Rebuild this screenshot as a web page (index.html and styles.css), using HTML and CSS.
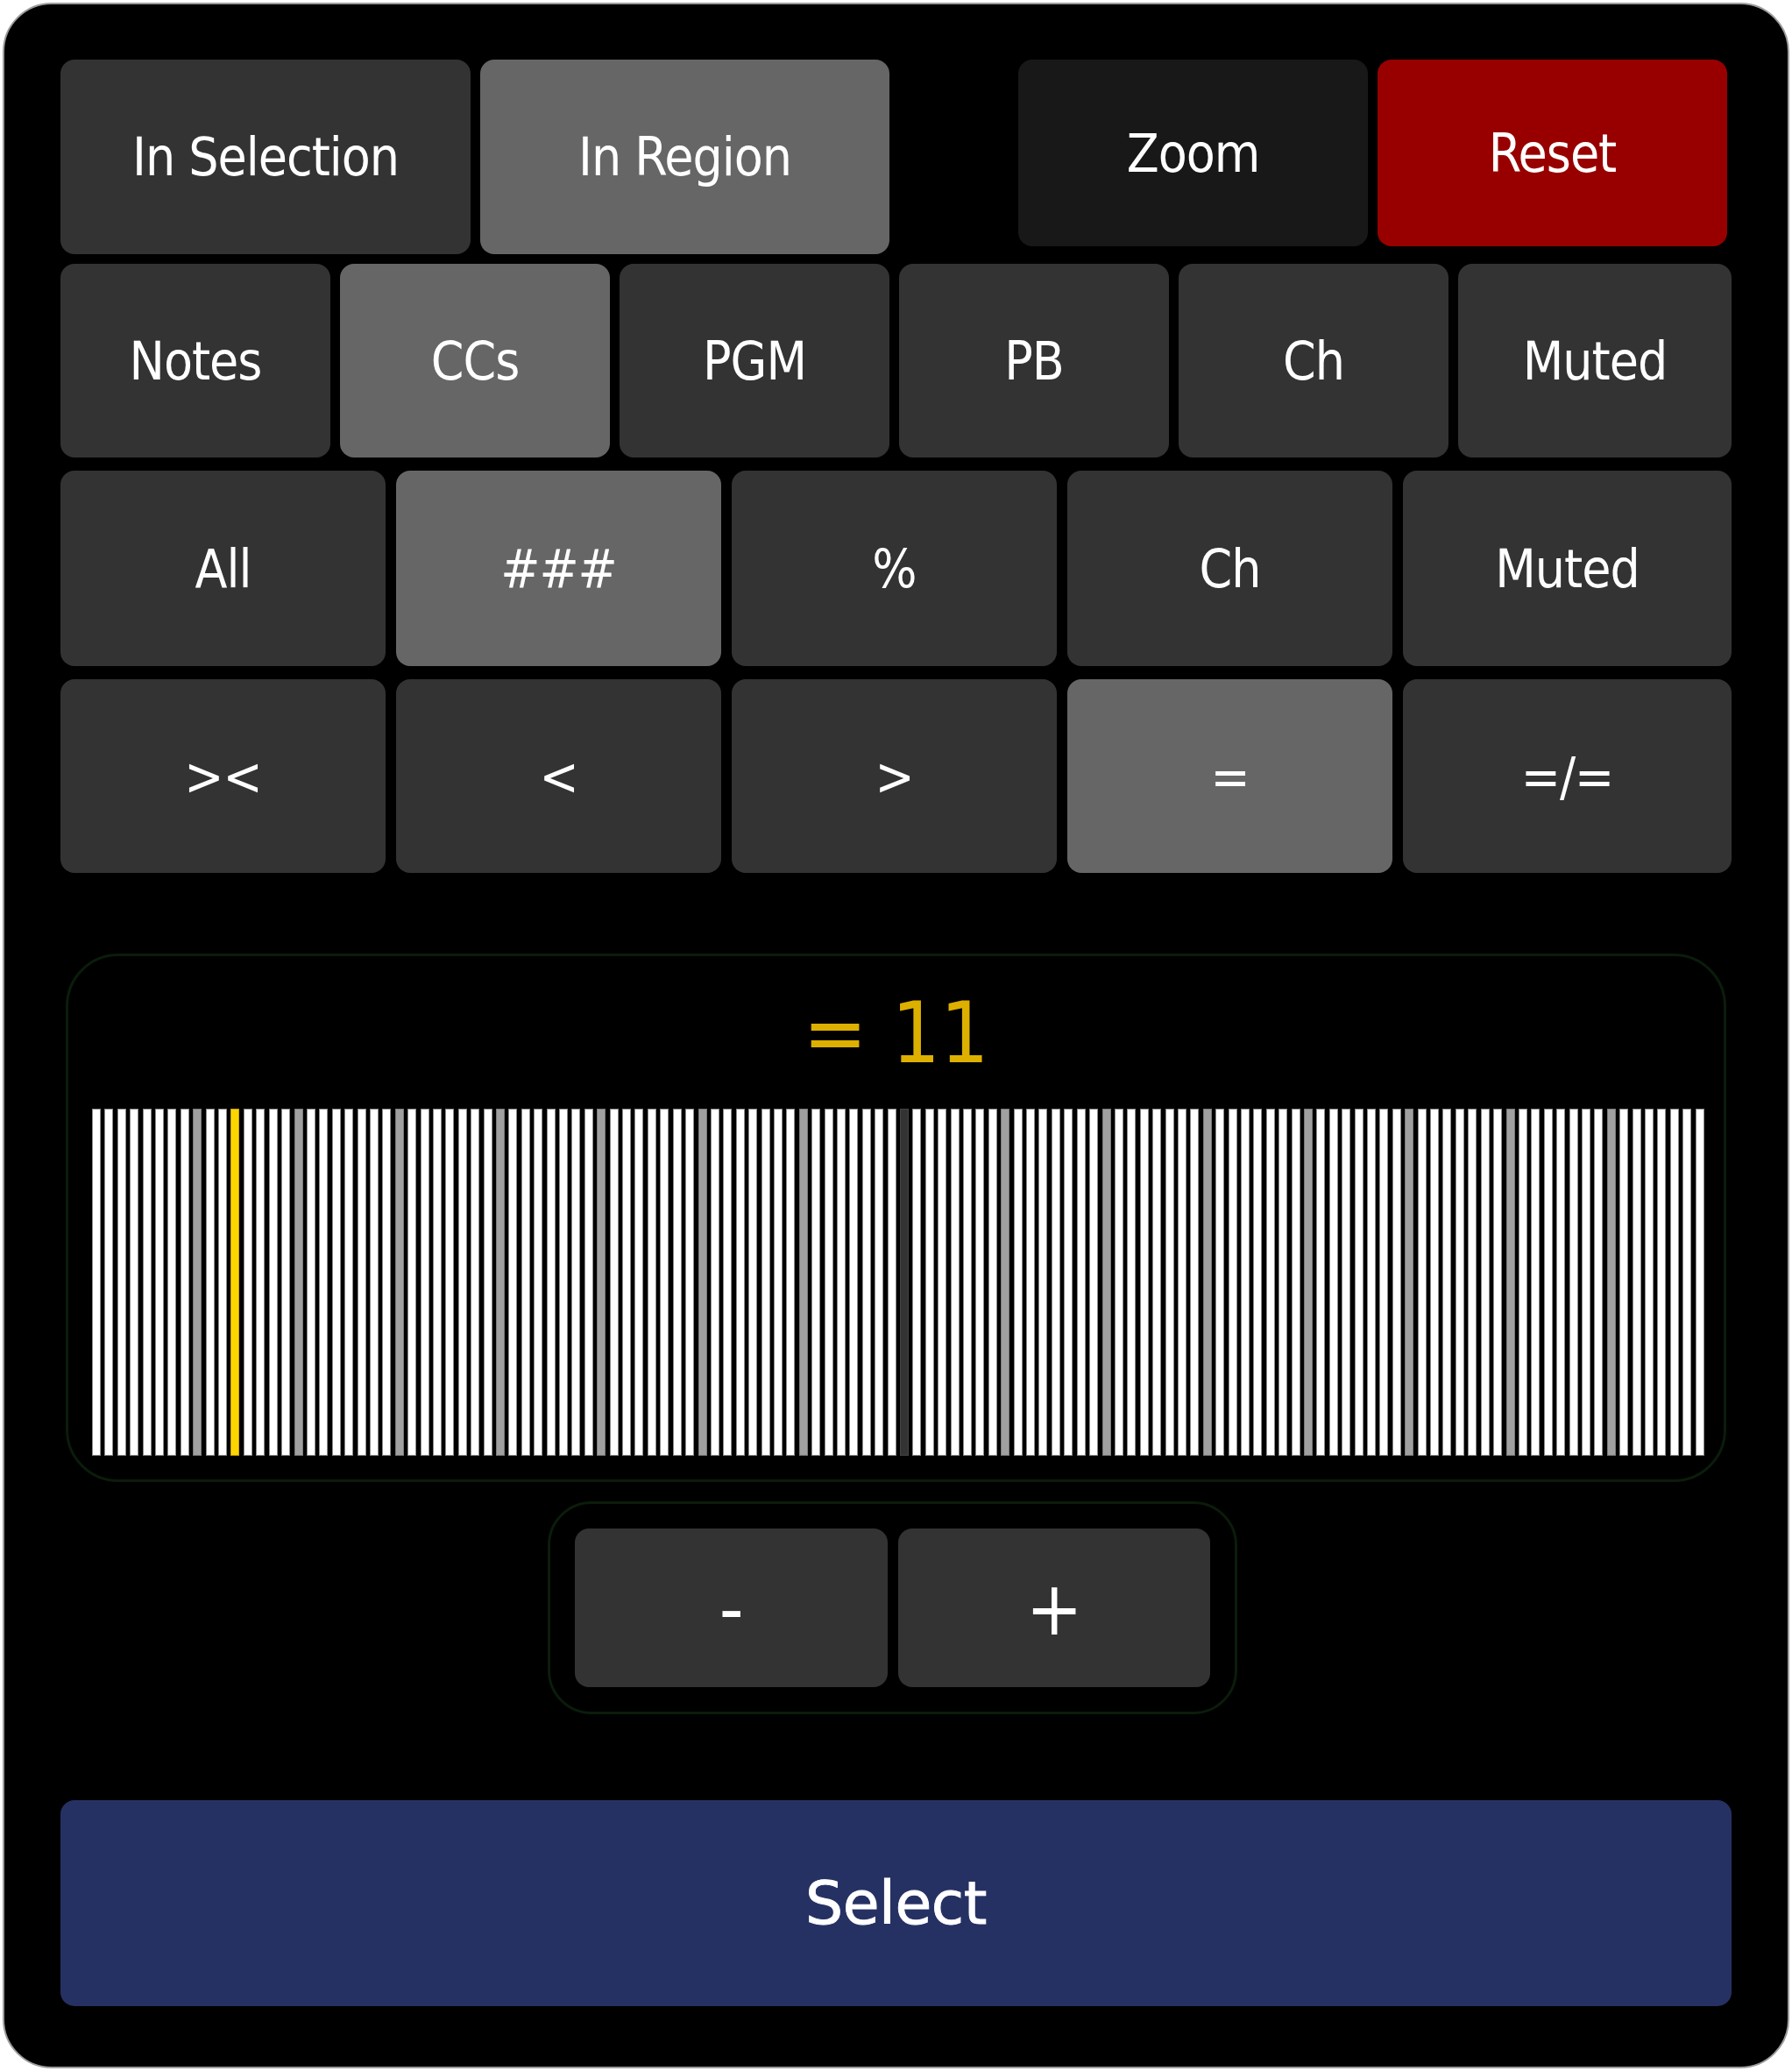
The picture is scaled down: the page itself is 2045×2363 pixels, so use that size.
FILE: index.html
```html
<!DOCTYPE html>
<html lang="en">
<head>
<meta charset="utf-8">
<title>MIDI Select</title>
<link rel="stylesheet" href="styles.css">
</head>
<body>
<div class="panel">
  <div class="row-top">
    <div class="btn scope-sel">In Selection</div>
    <div class="btn scope-reg on">In Region</div>
    <div class="spacer"></div>
    <div class="btn act zoom">Zoom</div>
    <div class="btn act reset">Reset</div>
  </div>
  <div class="row row-types">
    <div class="btn">Notes</div>
    <div class="btn on">CCs</div>
    <div class="btn">PGM</div>
    <div class="btn">PB</div>
    <div class="btn">Ch</div>
    <div class="btn">Muted</div>
  </div>
  <div class="row row-mode">
    <div class="btn">All</div>
    <div class="btn on">###</div>
    <div class="btn">%</div>
    <div class="btn">Ch</div>
    <div class="btn">Muted</div>
  </div>
  <div class="row row-op">
    <div class="btn">&gt;&lt;</div>
    <div class="btn">&lt;</div>
    <div class="btn">&gt;</div>
    <div class="btn on">=</div>
    <div class="btn">=/=</div>
  </div>

  <div class="display">
    <div class="readout">= 11</div>
    <div class="keys">
      <span class="key"></span><span class="key"></span><span class="key"></span><span class="key"></span><span class="key"></span><span class="key"></span><span class="key"></span><span class="key"></span>
      <span class="key mark"></span><span class="key"></span><span class="key"></span><span class="key sel"></span><span class="key"></span><span class="key"></span><span class="key"></span><span class="key"></span>
      <span class="key mark"></span><span class="key"></span><span class="key"></span><span class="key"></span><span class="key"></span><span class="key"></span><span class="key"></span><span class="key"></span>
      <span class="key mark"></span><span class="key"></span><span class="key"></span><span class="key"></span><span class="key"></span><span class="key"></span><span class="key"></span><span class="key"></span>
      <span class="key mark"></span><span class="key"></span><span class="key"></span><span class="key"></span><span class="key"></span><span class="key"></span><span class="key"></span><span class="key"></span>
      <span class="key mark"></span><span class="key"></span><span class="key"></span><span class="key"></span><span class="key"></span><span class="key"></span><span class="key"></span><span class="key"></span>
      <span class="key mark"></span><span class="key"></span><span class="key"></span><span class="key"></span><span class="key"></span><span class="key"></span><span class="key"></span><span class="key"></span>
      <span class="key mark"></span><span class="key"></span><span class="key"></span><span class="key"></span><span class="key"></span><span class="key"></span><span class="key"></span><span class="key"></span>
      <span class="key mid"></span><span class="key"></span><span class="key"></span><span class="key"></span><span class="key"></span><span class="key"></span><span class="key"></span><span class="key"></span>
      <span class="key mark"></span><span class="key"></span><span class="key"></span><span class="key"></span><span class="key"></span><span class="key"></span><span class="key"></span><span class="key"></span>
      <span class="key mark"></span><span class="key"></span><span class="key"></span><span class="key"></span><span class="key"></span><span class="key"></span><span class="key"></span><span class="key"></span>
      <span class="key mark"></span><span class="key"></span><span class="key"></span><span class="key"></span><span class="key"></span><span class="key"></span><span class="key"></span><span class="key"></span>
      <span class="key mark"></span><span class="key"></span><span class="key"></span><span class="key"></span><span class="key"></span><span class="key"></span><span class="key"></span><span class="key"></span>
      <span class="key mark"></span><span class="key"></span><span class="key"></span><span class="key"></span><span class="key"></span><span class="key"></span><span class="key"></span><span class="key"></span>
      <span class="key mark"></span><span class="key"></span><span class="key"></span><span class="key"></span><span class="key"></span><span class="key"></span><span class="key"></span><span class="key"></span>
      <span class="key mark"></span><span class="key"></span><span class="key"></span><span class="key"></span><span class="key"></span><span class="key"></span><span class="key"></span><span class="key"></span>
    </div>
  </div>

  <div class="stepper">
    <div class="btn step">-</div>
    <div class="btn step">+</div>
  </div>

  <div class="btn select">Select</div>
</div>
</body>
</html>
```

FILE: styles.css
```css
html, body {
  margin: 0;
  padding: 0;
}

body {
  width: 2045px;
  height: 2363px;
  background: #ffffff;
  overflow: hidden;
}

.panel {
  box-sizing: border-box;
  margin: 3px;
  width: 2039px;
  height: 2357px;
  border: 2px solid #9c9c9c;
  border-radius: 56px;
  background: #000000;
  padding: 63px 64px 0 64px;
  font-family: "DejaVu Sans Condensed", "DejaVu Sans", sans-serif;
  color: #ffffff;
}

.btn {
  display: flex;
  align-items: center;
  justify-content: center;
  background: #333333;
  border-radius: 16px;
  font-size: 60px;
  letter-spacing: -1px;
  white-space: nowrap;
}

.btn.on {
  background: #666666;
}

/* top row */
.row-top {
  display: flex;
  align-items: flex-start;
  gap: 11px;
  height: 222px;
}

.scope-sel {
  width: 468px;
  height: 222px;
}

.scope-reg {
  width: 467px;
  height: 222px;
}

.spacer {
  flex: 1;
}

.act {
  width: 399px;
  height: 213px;
}

.zoom {
  background: #181818;
}

.reset {
  background: #980000;
  margin-right: 5px;
}

/* grid rows */
.row {
  display: grid;
}

.row-types {
  grid-template-columns: repeat(5, 308px) 1fr;
  gap: 11px;
  margin-top: 11px;
  height: 221px;
}

.row-mode {
  grid-template-columns: repeat(4, 371px) 1fr;
  gap: 12px;
  margin-top: 15px;
  height: 223px;
}

.row-op {
  grid-template-columns: repeat(4, 371px) 1fr;
  gap: 12px;
  margin-top: 15px;
  height: 221px;
}

/* value display */
.display {
  box-sizing: border-box;
  margin: 92px 6px 0 6px;
  height: 603px;
  border: 3px solid #0b1c0b;
  border-radius: 60px;
  display: flex;
  flex-direction: column;
}

.readout {
  height: 174px;
  display: flex;
  align-items: center;
  justify-content: center;
  font-size: 97px;
  color: #ddb000;
  white-space: pre;
}

.keys {
  display: flex;
  gap: 4.4px;
  height: 396px;
  margin: 0 23px 0 27px;
}

.key {
  flex: 1;
  box-sizing: border-box;
  background: #ffffff;
  border: 1px solid #8c8c8c;
}

.key.mark {
  background: #a0a0a0;
  border-color: #7a7a7a;
}

.key.mid {
  background: #333333;
  border-color: #444444;
}

.key.sel {
  background: #ffd500;
  border-color: #c8a400;
}

/* stepper */
.stepper {
  box-sizing: border-box;
  margin: 22px 0 0 556px;
  width: 787px;
  height: 243px;
  border: 3px solid #0b1c0b;
  border-radius: 50px;
  padding: 28px;
  display: flex;
  gap: 12px;
}

.step {
  flex: 1;
  font-size: 86px;
}

/* select */
.select {
  margin-top: 98px;
  height: 235px;
  background: #263163;
  font-family: "DejaVu Sans", sans-serif;
  font-size: 68px;
  letter-spacing: -0.5px;
  -webkit-text-stroke: 0.9px #ffffff;
}
```
